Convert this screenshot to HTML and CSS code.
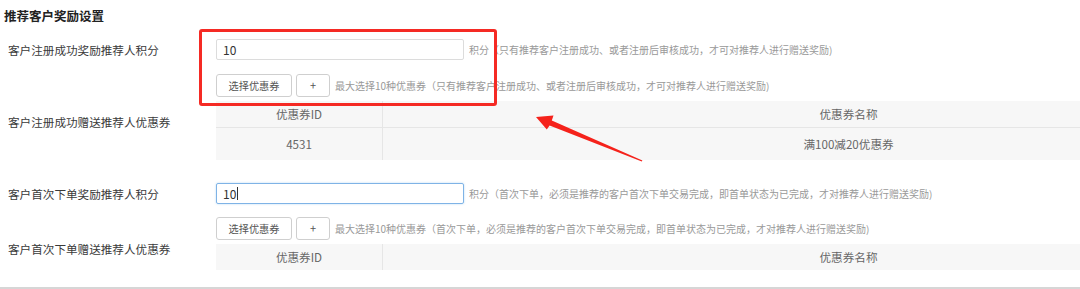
FILE: index.html
```html
<!DOCTYPE html>
<html lang="zh-CN">
<head>
<meta charset="utf-8">
<title>推荐客户奖励设置</title>
<link rel="stylesheet" href="styles.css">
</head>
<body>
<div class="page">
  <h2 class="title">推荐客户奖励设置</h2>

  <div class="row row-points first">
    <div class="label">客户注册成功奖励推荐人积分</div>
    <div class="field">
      <div class="input">10</div>
      <span class="help">积分（只有推荐客户注册成功、或者注册后审核成功，才可对推荐人进行赠送奖励)</span>
    </div>
  </div>

  <div class="row row-coupon">
    <div class="label label-coupon">客户注册成功赠送推荐人优惠券</div>
    <div class="field-col">
      <div class="btns">
        <button class="btn btn-select">选择优惠券</button>
        <button class="btn btn-plus">+</button>
        <span class="help">最大选择10种优惠券（只有推荐客户注册成功、或者注册后审核成功，才可对推荐人进行赠送奖励)</span>
      </div>
      <table class="tbl">
        <thead>
          <tr><th class="c-id">优惠券ID</th><th>优惠券名称</th></tr>
        </thead>
        <tbody>
          <tr><td class="c-id">4531</td><td>满100减20优惠券</td></tr>
        </tbody>
      </table>
    </div>
  </div>

  <div class="row row-points third">
    <div class="label">客户首次下单奖励推荐人积分</div>
    <div class="field">
      <div class="input focused">10<span class="caret"></span></div>
      <span class="help">积分（首次下单，必须是推荐的客户首次下单交易完成，即首单状态为已完成，才对推荐人进行赠送奖励)</span>
    </div>
  </div>

  <div class="row row-coupon fourth">
    <div class="label label-coupon">客户首次下单赠送推荐人优惠券</div>
    <div class="field-col">
      <div class="btns">
        <button class="btn btn-select">选择优惠券</button>
        <button class="btn btn-plus">+</button>
        <span class="help">最大选择10种优惠券（首次下单，必须是推荐的客户首次下单交易完成，即首单状态为已完成，才对推荐人进行赠送奖励)</span>
      </div>
      <table class="tbl">
        <thead>
          <tr><th class="c-id">优惠券ID</th><th>优惠券名称</th></tr>
        </thead>
      </table>
    </div>
  </div>

  <div class="footer-line"></div>

  <div class="annot-box"></div>
  <svg class="annot-arrow" width="1080" height="289" viewBox="0 0 1080 289">
    <polygon fill="#f5221b" points="536,117 553.5,115.6 551.8,120.6 642.4,160.4 641.8,161.6 549.6,125.6 546.8,129.4"/>
  </svg>
</div>
</body>
</html>
```

FILE: styles.css
```css
html, body {
  margin: 0;
  padding: 0;
  overflow: hidden;
  background: #fff;
}

body {
  font-family: "Noto Sans CJK SC", "Liberation Sans", sans-serif;
  color: #333;
  width: 1080px;
  height: 289px;
}

.page {
  position: relative;
  width: 1080px;
  height: 289px;
  padding: 0 0 0 4px;
  box-sizing: border-box;
  overflow: hidden;
}

.title {
  margin: 0;
  height: 30px;
  padding-top: 8px;
  box-sizing: border-box;
  font-size: 12.5px;
  line-height: 16px;
  font-weight: bold;
  color: #222;
}

.row {
  display: grid;
  grid-template-columns: 212px minmax(0, 1fr);
  align-items: center;
}

.row.first { margin-top: 9px; }
.row-coupon { margin-top: 14px; }
.row.third { margin-top: 23px; }
.row.fourth { margin-top: 13px; }

.label {
  padding-left: 4px;
  font-size: 11.6px;
  line-height: 16px;
  color: #3a3a3a;
  white-space: nowrap;
}

.label-coupon {
  padding-top: 10px;
}

.field {
  display: flex;
  align-items: center;
}

.input {
  width: 248px;
  height: 21px;
  box-sizing: border-box;
  border: 1px solid #dcdcdc;
  border-radius: 2px;
  padding: 0 6px;
  font-size: 12px;
  line-height: 19px;
  color: #333;
  display: flex;
  align-items: center;
}

.input.focused {
  border-color: #7fb3e6;
  box-shadow: 0 0 2px rgba(102, 175, 233, 0.5);
}

.caret {
  display: inline-block;
  width: 1px;
  height: 13px;
  background: #333;
  margin-left: 1px;
}

.help {
  margin-left: 5px;
  font-size: 10px;
  line-height: 14px;
  color: #999;
  white-space: nowrap;
}

.field-col {
  display: flex;
  flex-direction: column;
  gap: 4px;
  overflow: hidden;
}

.btns {
  display: flex;
  align-items: center;
}

.btn {
  height: 23px;
  box-sizing: border-box;
  border: 1px solid #cfcfcf;
  border-radius: 3px;
  background: #fff;
  font-family: inherit;
  font-size: 10.2px;
  line-height: 21px;
  color: #555;
  padding: 0;
  flex: none;
}

.btn-select { width: 76px; }
.btn-plus { width: 34px; margin-left: 4px; font-size: 11px; }

.btns .help { margin-left: 5px; }

.tbl {
  width: 1098px;
  flex: none;
  border-collapse: collapse;
  background: #f7f7f7;
  font-size: 11.6px;
  color: #666;
  table-layout: fixed;
}

.tbl th, .tbl td {
  text-align: center;
  font-weight: normal;
  padding: 0;
  border-left: 1px solid #e6e6e6;
}

.tbl th:first-child, .tbl td:first-child {
  border-left: none;
}

.tbl th {
  height: 26px;
  line-height: 16px;
}

.tbl td {
  height: 32px;
  line-height: 16px;
  border-top: 1px solid #e6e6e6;
}

.tbl .c-id { width: 166px; }

.footer-line {
  position: absolute;
  left: 0;
  right: 0;
  top: 287px;
  height: 2px;
  background: #d6d6d6;
}

.annot-box {
  position: absolute;
  left: 199px;
  top: 29px;
  width: 298px;
  height: 77px;
  box-sizing: border-box;
  border: 3px solid #f52a24;
  border-radius: 3px;
}

.annot-arrow {
  position: absolute;
  left: 0;
  top: 0;
}
```
